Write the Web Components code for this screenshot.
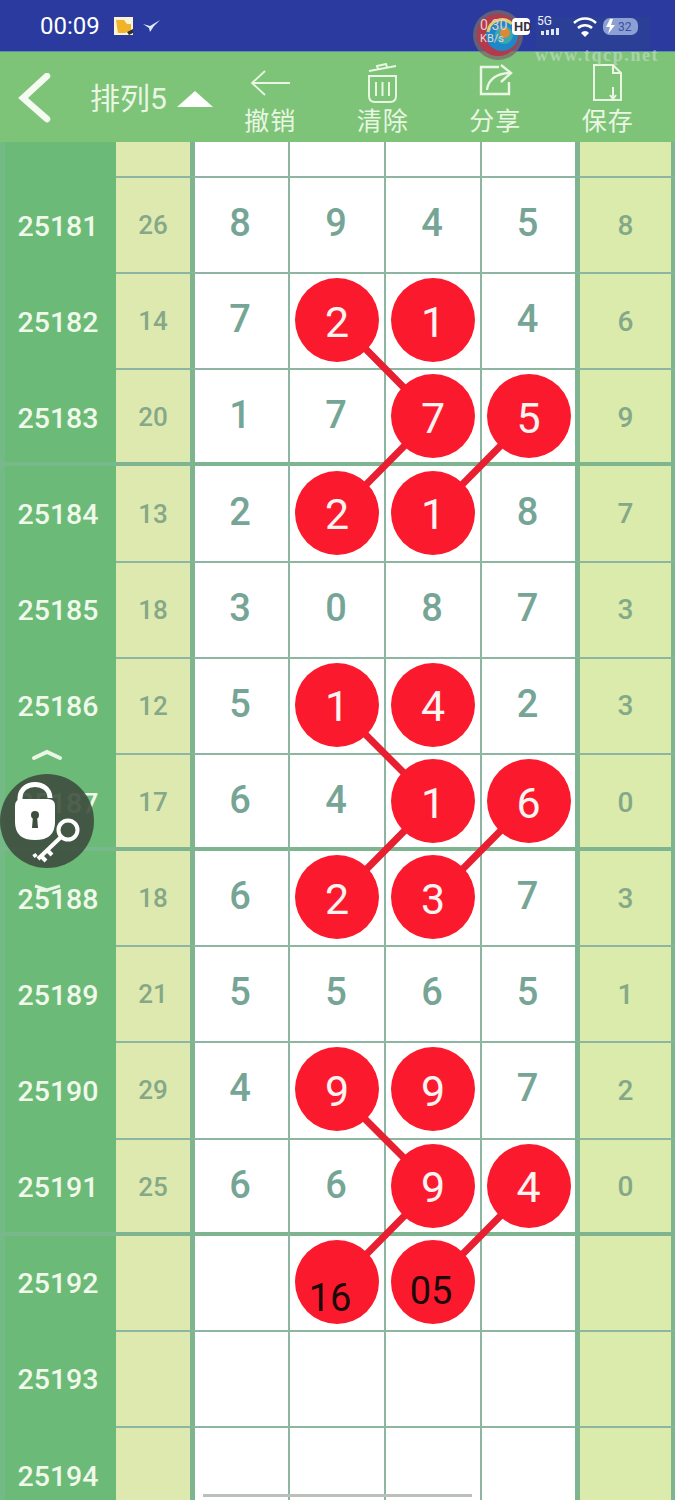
<!DOCTYPE html>
<html>
<head>
<meta charset="utf-8">
<style>
  html, body { margin: 0; padding: 0; background: #fff; }
  body { width: 675px; height: 1500px; overflow: hidden; position: relative; font-family: Roboto, "Noto Sans CJK SC", sans-serif; }
</style>
</head>
<body>
<status-bar></status-bar>
<top-bar title="排列5">
  <bar-action label="撤销"><svg viewBox="0 0 44 40" width="44" height="40" fill="none" stroke="#e9f6e2" stroke-width="1.8"><path d="M4 20H42M17 8 4 20 17 32"/></svg></bar-action>
  <bar-action label="清除"><svg viewBox="0 0 44 40" width="44" height="40" fill="none" stroke="#e9f6e2" stroke-width="2"><path d="M8 8 35 3M17 6l-1-3 9-2 1 3M8 13H35V33Q35 39 29 39H14Q8 39 8 33ZM15 19V33M21.500 19V33M28 19V33"/></svg></bar-action>
  <bar-action label="分享"><svg viewBox="0 0 44 40" width="44" height="40" fill="none" stroke="#e9f6e2" stroke-width="2.400"><path d="M26 4H8V31H36V19M14 27C15 17 23 10 38 10M28 2 38 10 28 19"/></svg></bar-action>
  <bar-action label="保存"><svg viewBox="0 0 44 40" width="44" height="40" fill="none" stroke="#e9f6e2" stroke-width="2"><path d="M8 2H27L35 10V37H8ZM27 2V10H35M27 24V36M24 32 27 36 30 32"/></svg></bar-action>
</top-bar>
<lot-grid></lot-grid>

<script>
const statusTemplate = `
  <style>
    :host { display: flex; align-items: center; height: 52px; background: #2a3a9e; color: #fff; padding-left: 40px; box-sizing: border-box; position: relative; border-bottom: 1px solid #5e8fa8; }
    .time { font: 400 24px Roboto, sans-serif; }
    svg.left { margin-left: 13px; }
    .right { position: absolute; left: 470px; top: 8px; }
    .mark { position: absolute; left: 535px; top: 45px; font: 700 18px "Liberation Serif", serif; letter-spacing: 1.600px; color: rgba(210,225,215,.55); white-space: nowrap; }
  </style>
  <span class="time">00:09</span>
  <svg class="left" width="48" height="24" viewBox="0 0 48 24">
    <rect x="1" y="3" width="19" height="18" fill="#fbf3d8"/>
    <path d="M3 6h8l3 4h4v6l-6 3H5z" fill="#f0b32a"/>
    <path d="M14 18l6-3 0 4-4 2z" fill="#3a3020"/>
    <path d="M30 10 L37 12 L47 6 L41 12 L37 18 L36 14 Z" fill="#dfe8fb"/>
  </svg>
  <svg class="right" width="180" height="62" viewBox="0 0 180 62">
    <rect x="66" y="9" width="130" height="32" fill="#2b3f96"/>
    <circle cx="28" cy="27" r="25" fill="#7b6a68" opacity=".75"/>
    <circle cx="28" cy="27" r="21" fill="#b23a4c"/>
    <circle cx="32" cy="27" r="16" fill="#1c88c8"/>
    <path d="M18 24a14 14 0 0 1 24-8" fill="none" stroke="#d8d36a" stroke-width="3"/>
    <circle cx="34" cy="27" r="9" fill="#3ba7b0"/>
    <circle cx="35" cy="25" r="5" fill="#d8893a"/>
    <text x="10" y="22" font-family="Roboto" font-size="14" fill="#f3c9c9">0.30</text>
    <text x="10" y="34" font-family="Roboto" font-size="11" fill="#e6d6d6">KB/s</text>
    <rect x="42" y="10" width="18" height="17" rx="4" fill="#fff"/>
    <text x="44" y="23" font-family="Roboto" font-weight="700" font-size="13" fill="#334">HD</text>
    <text x="67" y="17" font-family="Roboto" font-size="12" fill="#eef">5G</text>
    <path d="M75 22h3v4h-3zM80 21h3v5h-3zM85 20h3v6h-3zM90 19h3v7h-3z" fill="#dfe6f6" transform="translate(-4 1)"/>
    <path d="M104 15a16 16 0 0 1 22 0M108 20a10 10 0 0 1 14 0" fill="none" stroke="#fff" stroke-width="2.5"/>
    <path d="M111 25a5 5 0 0 1 8 0l-4 4z" fill="#fff"/>
    <rect x="133" y="10" width="35" height="17" rx="7" fill="#8da0d4"/>
    <path d="M140 11 136 19h4l-2 7 7-9h-4l2-6z" fill="#fff"/>
    <text x="148" y="23" font-family="Roboto" font-size="12" fill="#3c4f9f">32</text>
  </svg>
  <span class="mark">www.tqcp.net</span>`;

customElements.define("status-bar", class StatusBar extends HTMLElement {
  constructor() {
    super();
    this.attachShadow({ mode: "open" }).innerHTML = statusTemplate;
  }
});

customElements.define("top-bar", class TopBar extends HTMLElement {
  constructor() {
    super();
    this.attachShadow({ mode: "open" });
  }
  connectedCallback() {
    this.shadowRoot.innerHTML = `
      <style>
        :host { display: flex; height: 90px; background: #7dc478; box-sizing: border-box; }
        .back { width: 90px; padding: 21px 0 0 18px; box-sizing: border-box; flex: none; }
        .title { display: flex; align-items: flex-start; width: 124px; flex: none; padding-top: 22px; box-sizing: border-box; color: #eaf6e4; font: 400 30px Roboto, "Noto Sans CJK SC", sans-serif; }
        .title i { width: 0; height: 0; margin: 17px 0 0 10px; border: solid transparent; border-width: 0 18px 16px; border-bottom-color: #fff; }
        .actions { display: flex; flex: 1; padding-right: 11px; }
      </style>
      <div class="back"><svg width="34" height="50" viewBox="0 0 34 50" fill="none" stroke="#f6fbf2" stroke-width="6.5" stroke-linecap="round"><path d="M29 3 5 25 29 46"/></svg></div>
      <div class="title"><span>${this.getAttribute("title")}</span><i></i></div>
      <div class="actions"><slot></slot></div>`;
  }
});

customElements.define("bar-action", class BarAction extends HTMLElement {
  constructor() {
    super();
    this.attachShadow({ mode: "open" });
  }
  connectedCallback() {
    this.shadowRoot.innerHTML = `
      <style>
        :host { display: flex; flex: 1; flex-direction: column; align-items: center; padding-top: 11px; box-sizing: border-box; color: #e9f6e2; }
        span { font: 400 25px "Noto Sans CJK SC", sans-serif; letter-spacing: 1px; line-height: 30px; margin-top: 1px; }
        ::slotted(svg) { display: block; }
      </style>
      <slot></slot>
      <span>${this.getAttribute("label")}</span>`;
  }
});

customElements.define("lot-cell", class LotCell extends HTMLElement {
  constructor() {
    super();
    this.attachShadow({ mode: "open" });
  }
  connectedCallback() {
    const value = this.getAttribute("value") || "";
    const kind = this.getAttribute("kind") || "";
    const body = kind === "hit" || kind === "next"
      ? `<b class="${kind} v${value}"><em>${value}</em></b>`
      : `<span>${value}</span>`;
    this.shadowRoot.innerHTML = `
      <style>
        :host { display: flex; align-items: center; justify-content: center; box-sizing: border-box; background: #fff; border-left: 2px solid #8cb5a2; border-top: var(--line, 2px) solid var(--line-colour, #8cb5a2); overflow: visible; }
        :host([wide]) { border-left-width: 5px; border-left-color: #7fb490; }
        span { font: 500 38px Roboto, sans-serif; color: #76a596; margin: -4px 2px 0 0; }
        :host([wide]) span { margin-right: 3px; }
        b { position: relative; z-index: 2; display: flex; align-items: center; justify-content: center; width: 84px; height: 84px; border-radius: 50%; background: #fb192e; margin-top: -2px; }
        em { font: 400 43px Roboto, sans-serif; color: #fdf3f0; margin-top: 3px; }
        .next em { font-size: 38px; color: #1a0a08; margin-top: 0; }
        .v16 em { margin: 33px 14px 0 0; }
        .v05 em { margin: 18px 4px 0 0; }
      </style>
      ${body}`;
  }
});

const rows = [
  ["", "", "", "", "", "", ""],
  ["25181", "26", "8", "9", "4", "5", "8"],
  ["25182", "14", "7", "2*", "1*", "4", "6"],
  ["25183", "20", "1", "7", "7*", "5*", "9"],
  ["25184", "13", "2", "2*", "1*", "8", "7"],
  ["25185", "18", "3", "0", "8", "7", "3"],
  ["25186", "12", "5", "1*", "4*", "2", "3"],
  ["25187", "17", "6", "4", "1*", "6*", "0"],
  ["25188", "18", "6", "2*", "3*", "7", "3"],
  ["25189", "21", "5", "5", "6", "5", "1"],
  ["25190", "29", "4", "9*", "9*", "7", "2"],
  ["25191", "25", "6", "6", "9*", "4*", "0"],
  ["25192", "", "", "16+", "05+", "", ""],
  ["25193", "", "", "", "", "", ""],
  ["25194", "", "", "", "", "", ""],
];
const thick = ["25184", "25188", "25192"];

const renderDigit = (text, wide) => {
  const kind = text.endsWith("*") ? "hit" : text.endsWith("+") ? "next" : "";
  return `<lot-cell ${wide ? "wide" : ""} kind="${kind}" value="${text.replace(/[*+]/, "")}"></lot-cell>`;
};

const renderRow = (row) => `
  <div class="row ${thick.includes(row[0]) ? "thick" : ""} ${row[0] ? "" : "top"}">
    <div class="issue"><span>${row[0]}</span></div>
    <div class="sum"><span>${row[1]}</span></div>
    ${renderDigit(row[2], true)}
    ${renderDigit(row[3])}
    ${renderDigit(row[4])}
    ${renderDigit(row[5])}
    <div class="end"><span>${row[6]}</span></div>
  </div>`;

customElements.define("lot-grid", class LotGrid extends HTMLElement {
  constructor() {
    super();
    this.attachShadow({ mode: "open" }).innerHTML = `
      <style>
        :host { display: block; position: relative; height: 1358px; overflow: hidden; background: #6cba78; }
        .row { display: grid; grid-template-columns: 116px 74px 98px 96px 96px 95px 100px; height: 96.16px; box-sizing: border-box; }
        .row.top { height: 34px; }
        .row.thick { --line: 4px; --line-colour: #7fb490; height: 98.16px; margin-top: -2px; }
        .issue, .sum, .end { display: flex; align-items: center; justify-content: center; box-sizing: border-box; }
        .issue { background: linear-gradient(90deg, #74ba86 0 5px, #6cba78 5px); font: 500 28.500px Roboto, sans-serif; color: #f0f9ea; border-top: var(--line, 0) solid #79b88a; }
        .issue span { margin-top: 4px; }
        .thick .issue span { margin-top: 2px; }
        .sum { background: #dee9af; font: 500 26px Roboto, sans-serif; color: #84a888; border-top: var(--line, 2px) solid var(--line-colour, #8cb5a2); }
        .end { background: #daebab; font: 500 28px Roboto, sans-serif; color: #84a888; border-left: 5px solid #7fb490; border-right: 4px solid #7fb490; border-top: var(--line, 2px) solid var(--line-colour, #8cb5a2); }
        .top .sum, .top .end, .top lot-cell { --line: 0px; }
        .paths { position: absolute; left: 0; top: 0; z-index: 1; pointer-events: none; }
        .scroll { position: absolute; left: 203px; top: 1352px; width: 269px; height: 3px; background: #bcc0bd; z-index: 3; }
        lock-badge { position: absolute; left: 0; top: 632px; z-index: 4; }
      </style>
      ${rows.map(renderRow).join("")}
      <svg class="paths" width="675" height="1358" fill="none" stroke="#e81f30" stroke-width="7">
        <path d="M337 178 433 275 337 372M529 275 433 372"/>
        <path d="M337 564 433 660 337 757M529 660 433 757"/>
        <path d="M337 949 433 1045 337 1142M529 1045 433 1142"/>
      </svg>
      <lock-badge></lock-badge>
      <div class="scroll"></div>`;
  }
});

customElements.define("lock-badge", class LockBadge extends HTMLElement {
  constructor() {
    super();
    this.attachShadow({ mode: "open" }).innerHTML = `
      <style>
        :host { display: block; width: 94px; height: 94px; }
        svg { display: block; overflow: visible; }
      </style>
      <svg width="94" height="94" viewBox="0 0 94 94">
        <path d="M34 -16 47 -22 60 -16" fill="none" stroke="#eaf5e4" stroke-width="4" stroke-linecap="round"/>
        <circle cx="47" cy="47" r="47" fill="#3e4e3e" fill-opacity=".9"/>
        <path d="M20 28V24C20 6 50 6 50 24" fill="none" stroke="#fff" stroke-width="5"/>
        <path d="M15 32Q15 25 22 25H48Q55 25 55 32V48Q55 66 35 66 15 66 15 48Z" fill="#fff"/>
        <circle cx="35" cy="41" r="4" fill="#3e4e3e"/>
        <path d="M33 42h4l1 12h-6z" fill="#3e4e3e"/>
        <circle cx="68" cy="56" r="9.500" fill="none" stroke="#fff" stroke-width="4"/>
        <path d="M61 63 38 85M47 76l5 5M41 82l5 5M36 83l-2-3" fill="none" stroke="#fff" stroke-width="4"/>
        <path d="M35 112 47 116 60 112" fill="none" stroke="#eaf5e4" stroke-width="3"/>
      </svg>`;
  }
});
</script>
</body>
</html>
